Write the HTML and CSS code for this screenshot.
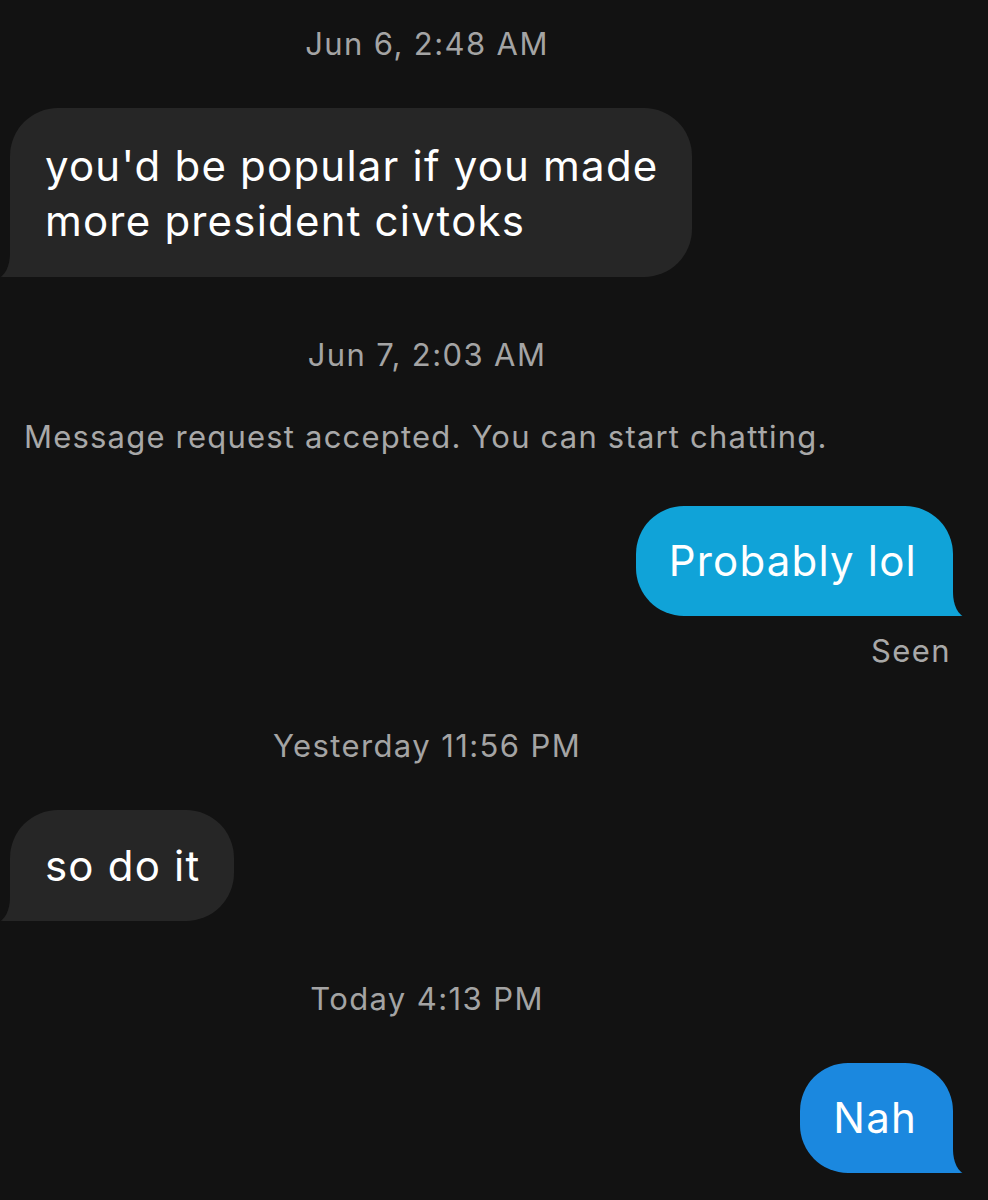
FILE: index.html
```html
<!DOCTYPE html>
<html>
<head>
	<link rel="stylesheet" href="styles.css">
</head>
<body>

	<section class="thread">
		<div class="stamp first">Jun 6, 2:48 AM</div>

		<div class="row them">
			<div class="bubble">you'd be popular if you made<br>more president civtoks</div>
		</div>

		<div class="stamp gap-lg">Jun 7, 2:03 AM</div>

		<div class="notice">Message request accepted. You can start chatting.</div>

		<div class="row me tight">
			<div class="bubble cyan">Probably lol</div>
		</div>
		<div class="seen">Seen</div>

		<div class="stamp gap-md">Yesterday 11:56 PM</div>

		<div class="row them">
			<div class="bubble one">so do it</div>
		</div>

		<div class="stamp gap-lg">Today 4:13 PM</div>

		<div class="row me">
			<div class="bubble blue">Nah</div>
		</div>
	</section>

</body>
</html>
```

FILE: styles.css
```css
*, html, body{
	margin: 0;
	padding: 0;
}
body{
	background: #121212;
	font-family: Inter, "Liberation Sans", sans-serif;
	color: #fff;
	overflow: hidden;
}
.thread{
	height: 1200px;
}

.stamp{
	width: 854px;
	text-align: center;
	font-size: 31px;
	line-height: 40px;
	letter-spacing: 1.4px;
	color: #a4a4a4;
}
.stamp.first{ margin-top: 24px; }
.stamp.gap-lg{ margin-top: 58px; }
.stamp.gap-md{ margin-top: 55px; }

.notice{
	margin-top: 42px;
	padding-left: 24px;
	font-size: 31px;
	line-height: 40px;
	letter-spacing: 1.2px;
	color: #a8a8a8;
}

.row{
	display: flex;
	margin-top: 44px;
}
.row.tight{ margin-top: 49px; }
.row.them{
	justify-content: flex-start;
	padding-left: 10px;
}
.row.me{
	justify-content: flex-end;
	padding-right: 35px;
}

.bubble{
	position: relative;
	background: #262626;
	font-size: 42px;
	line-height: 55px;
	letter-spacing: 1.2px;
	padding: 30px 34px 29px 35px;
	border-radius: 48px;
}
.bubble.one{
	line-height: 52px;
}
.them .bubble{
	border-bottom-left-radius: 0;
}
.me .bubble{
	line-height: 50px;
	padding: 30px 36px 30px 33px;
	border-bottom-right-radius: 0;
}
.bubble.cyan{ background: #10a3d8; }
.bubble.blue{ background: #1b88df; }

/* tail flare */
.bubble::before,
.bubble::after{
	content: "";
	position: absolute;
	bottom: 0;
	height: 24px;
}
.them .bubble::before{
	left: -10px;
	width: 12px;
	background: #262626;
	border-bottom-left-radius: 3px;
}
.them .bubble::after{
	left: -22px;
	width: 22px;
	background: #121212;
	border-bottom-right-radius: 12px 24px;
}
.me .bubble::before{
	right: -10px;
	width: 12px;
	border-bottom-right-radius: 3px;
}
.me .bubble.cyan::before{ background: #10a3d8; }
.me .bubble.blue::before{ background: #1b88df; }
.me .bubble::after{
	right: -22px;
	width: 22px;
	background: #121212;
	border-bottom-left-radius: 12px 24px;
}

.seen{
	margin-top: 15px;
	text-align: right;
	padding-right: 37px;
	font-size: 31px;
	line-height: 40px;
	letter-spacing: 1.4px;
	color: #a8a8a8;
}
```
